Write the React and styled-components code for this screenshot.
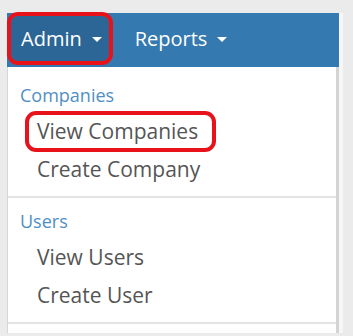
import React from 'react'
import styled, { createGlobalStyle, css } from 'styled-components'

const GlobalStyle = createGlobalStyle`
  html, body {
    margin: 0;
    background: #ebebeb;
    font-family: 'Open Sans', 'Liberation Sans', sans-serif;
  }
`

const highlight = css`
  outline: 4px solid #e8121b;
  outline-offset: 0;
`

const Page = styled.div`
  padding: 13px 0 0 7px;
  height: 336px;
  box-sizing: border-box;
`

const Panel = styled.div`
  width: 332px;
  box-shadow: 4px 0 0 #f6f6f6;
`

const NavBar = styled.nav`
  display: flex;
  gap: 16px;
  height: 54px;
  background: #3479b0;
  box-shadow: 0 1px 0 #2d6b9d;
`

const NavItem = styled.div`
  display: flex;
  align-items: center;
  gap: 10px;
  height: 45px;
  margin: 3px 0 0 ${p => (p.$first ? '4px' : '0')};
  padding: 0 7px 0 10px;
  border-radius: 7px;
  color: #fff;
  font-size: 20px;
  font-weight: 500;
  line-height: 45px;
  background: ${p => (p.$active ? '#2b6696' : 'transparent')};
  ${p => p.$marked && highlight}
`

const Caret = styled.span`
  width: 0;
  height: 0;
  margin-top: 2px;
  border-left: 5px solid transparent;
  border-right: 5px solid transparent;
  border-top: 5px solid #fff;
`

const Menu = styled.div`
  background: #fff;
  border-left: 1px solid #d6d6d6;
  border-right: 3px solid #d4d4d4;
  padding-top: 5px;
  height: 266px;
  box-sizing: border-box;
`

const Section = styled.div`
  display: flex;
  flex-direction: column;
  align-items: flex-start;
  gap: 5px;
  padding: 11px 0 10px 12px;
  border-bottom: 2px solid #e4e4e4;
`

const Heading = styled.div`
  color: #4f8fc5;
  font-size: 18px;
  line-height: 24px;
  margin-bottom: 3px;
`

const Item = styled.div`
  margin-left: 9px;
  padding: 0 14px 0 8px;
  border-radius: 7px;
  color: #555;
  font-size: 21px;
  line-height: 33px;
  ${p => p.$marked && highlight}
`

const sections = [
  { title: 'Companies', items: ['View Companies', 'Create Company'], marked: 'View Companies' },
  { title: 'Users', items: ['View Users', 'Create User'] },
]

export default function App() {
  return (
    <Page>
      <GlobalStyle />
      <Panel>
        <NavBar>
          <NavItem $first $active $marked>
            Admin <Caret />
          </NavItem>
          <NavItem>
            Reports <Caret />
          </NavItem>
        </NavBar>
        <Menu>
          {sections.map(s => (
            <Section key={s.title}>
              <Heading>{s.title}</Heading>
              {s.items.map(i => (
                <Item key={i} $marked={i === s.marked}>
                  {i}
                </Item>
              ))}
            </Section>
          ))}
        </Menu>
      </Panel>
    </Page>
  )
}
